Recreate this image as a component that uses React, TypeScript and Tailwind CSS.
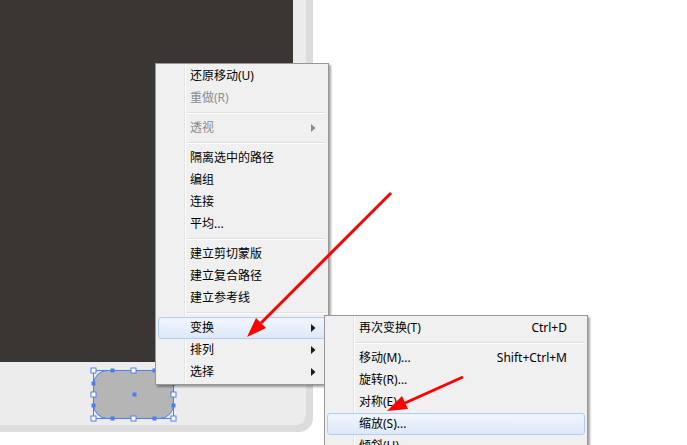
import React from 'react';

type Item =
  | { type: 'sep' }
  | { type: 'item'; label: string; disabled?: boolean; sub?: boolean; active?: boolean; shortcut?: string };

const mainMenu: Item[] = [
  { type: 'item', label: '还原移动(U)' },
  { type: 'item', label: '重做(R)', disabled: true },
  { type: 'sep' },
  { type: 'item', label: '透视', disabled: true, sub: true },
  { type: 'sep' },
  { type: 'item', label: '隔离选中的路径' },
  { type: 'item', label: '编组' },
  { type: 'item', label: '连接' },
  { type: 'item', label: '平均...' },
  { type: 'sep' },
  { type: 'item', label: '建立剪切蒙版' },
  { type: 'item', label: '建立复合路径' },
  { type: 'item', label: '建立参考线' },
  { type: 'sep' },
  { type: 'item', label: '变换', sub: true, active: true },
  { type: 'item', label: '排列', sub: true },
  { type: 'item', label: '选择', sub: true },
];

const transformMenu: Item[] = [
  { type: 'item', label: '再次变换(T)', shortcut: 'Ctrl+D' },
  { type: 'sep' },
  { type: 'item', label: '移动(M)...', shortcut: 'Shift+Ctrl+M' },
  { type: 'item', label: '旋转(R)...' },
  { type: 'item', label: '对称(E)...' },
  { type: 'item', label: '缩放(S)...', active: true },
  { type: 'item', label: '倾斜(H)...' },
  { type: 'item', label: '分别变换(N)...' },
];

function Arrow({ disabled }: { disabled?: boolean }) {
  return (
    <svg width="5" height="8" viewBox="0 0 5 8" className="shrink-0">
      <polygon points="0,0 4.5,4 0,8" fill={disabled ? '#8a8a8a' : '#1a1a1a'} />
    </svg>
  );
}

function Menu({ items }: { items: Item[] }) {
  return (
    <div className="relative border border-[#979797] bg-[#f0f0f0] py-[1px] shadow-[2px_2px_2px_rgba(0,0,0,0.35)]">
      {/* gutter */}
      <div className="absolute left-[28px] top-0 bottom-0 w-px bg-[#e2e3e3]" />
      <div className="absolute left-[29px] top-0 bottom-0 w-px bg-white" />
      {items.map((it, i) =>
        it.type === 'sep' ? (
          <div key={i} className="relative flex h-[8px] flex-col justify-center pl-[30px] pr-[2px]">
            <div className="h-px bg-[#e0e0e0]" />
            <div className="h-px bg-white" />
          </div>
        ) : (
          <div
            key={i}
            className={`relative mx-[2px] flex h-[22px] items-center rounded-[3px] border pl-[31px] pr-[9px] ${
              it.active
                ? 'border-[#aecdf2] bg-gradient-to-b from-[#f1f6fd] to-[#dde9f8]'
                : 'border-transparent'
            } ${it.disabled ? 'text-[#8d8d8d]' : 'text-black'}`}
          >
            <span className="flex-1 whitespace-nowrap">{it.label}</span>
            {it.shortcut && <span className="whitespace-nowrap pr-[8px]">{it.shortcut}</span>}
            {it.sub && <Arrow disabled={it.disabled} />}
          </div>
        )
      )}
    </div>
  );
}

function SelectedShape() {
  const blue = '#4a7ff2';
  const open = [
    [5, 5], [45, 5], [85, 5],
    [5, 29], [85, 29],
    [5, 53], [45, 53], [85, 53],
  ];
  const filled = [
    [24, 5], [66, 5], [24, 53], [66, 53],
    [5, 18], [5, 40], [85, 18], [85, 40], [46, 29],
  ];
  return (
    <svg width="92" height="60" viewBox="0 0 92 60" className="absolute left-[88px] top-[365px]">
      <rect x="5.5" y="5.5" width="80" height="48" rx="14" fill="#b5b5b5" stroke={blue} strokeWidth="1" />
      <rect x="5.5" y="5.5" width="80" height="48" fill="none" stroke={blue} strokeWidth="1" />
      {filled.map(([x, y], i) => (
        <rect key={'f' + i} x={x - 1.5} y={y - 1.5} width="4" height="4" fill={blue} />
      ))}
      {open.map(([x, y], i) => (
        <rect key={'o' + i} x={x - 2} y={y - 2} width="5" height="5" fill="white" stroke={blue} strokeWidth="1" />
      ))}
    </svg>
  );
}

export default function App() {
  return (
    <div className="relative h-[445px] w-[687px] overflow-hidden bg-white font-['Noto_Sans','Noto_Sans_CJK_SC',sans-serif] text-[12px] leading-none">
      {/* canvas frame */}
      <div className="h-[432px] w-[313px] rounded-br-[14px] bg-[#dcdcdc]">
        <div className="h-[425px] w-[306px] rounded-br-[10px] bg-[#ececec]">
          <div className="h-[362px] w-[293px] bg-[#393634]" />
        </div>
      </div>

      <SelectedShape />

      {/* context menu */}
      <div className="absolute left-[155px] top-[63px] w-[174px]">
        <Menu items={mainMenu} />
      </div>

      {/* transform submenu */}
      <div className="absolute left-[324px] top-[315px] w-[264px]">
        <Menu items={transformMenu} />
      </div>

      {/* red annotation arrows */}
      <svg width="687" height="445" className="pointer-events-none absolute inset-0">
        <line x1="391" y1="193" x2="261" y2="323" stroke="#ff0000" strokeWidth="3" />
        <polygon points="247,337 266,328 256,318" fill="#ff0000" />
        <line x1="463" y1="377" x2="405" y2="403" stroke="#ff0000" strokeWidth="3" />
        <polygon points="387,411 408,409 402,396" fill="#ff0000" />
      </svg>
    </div>
  );
}
